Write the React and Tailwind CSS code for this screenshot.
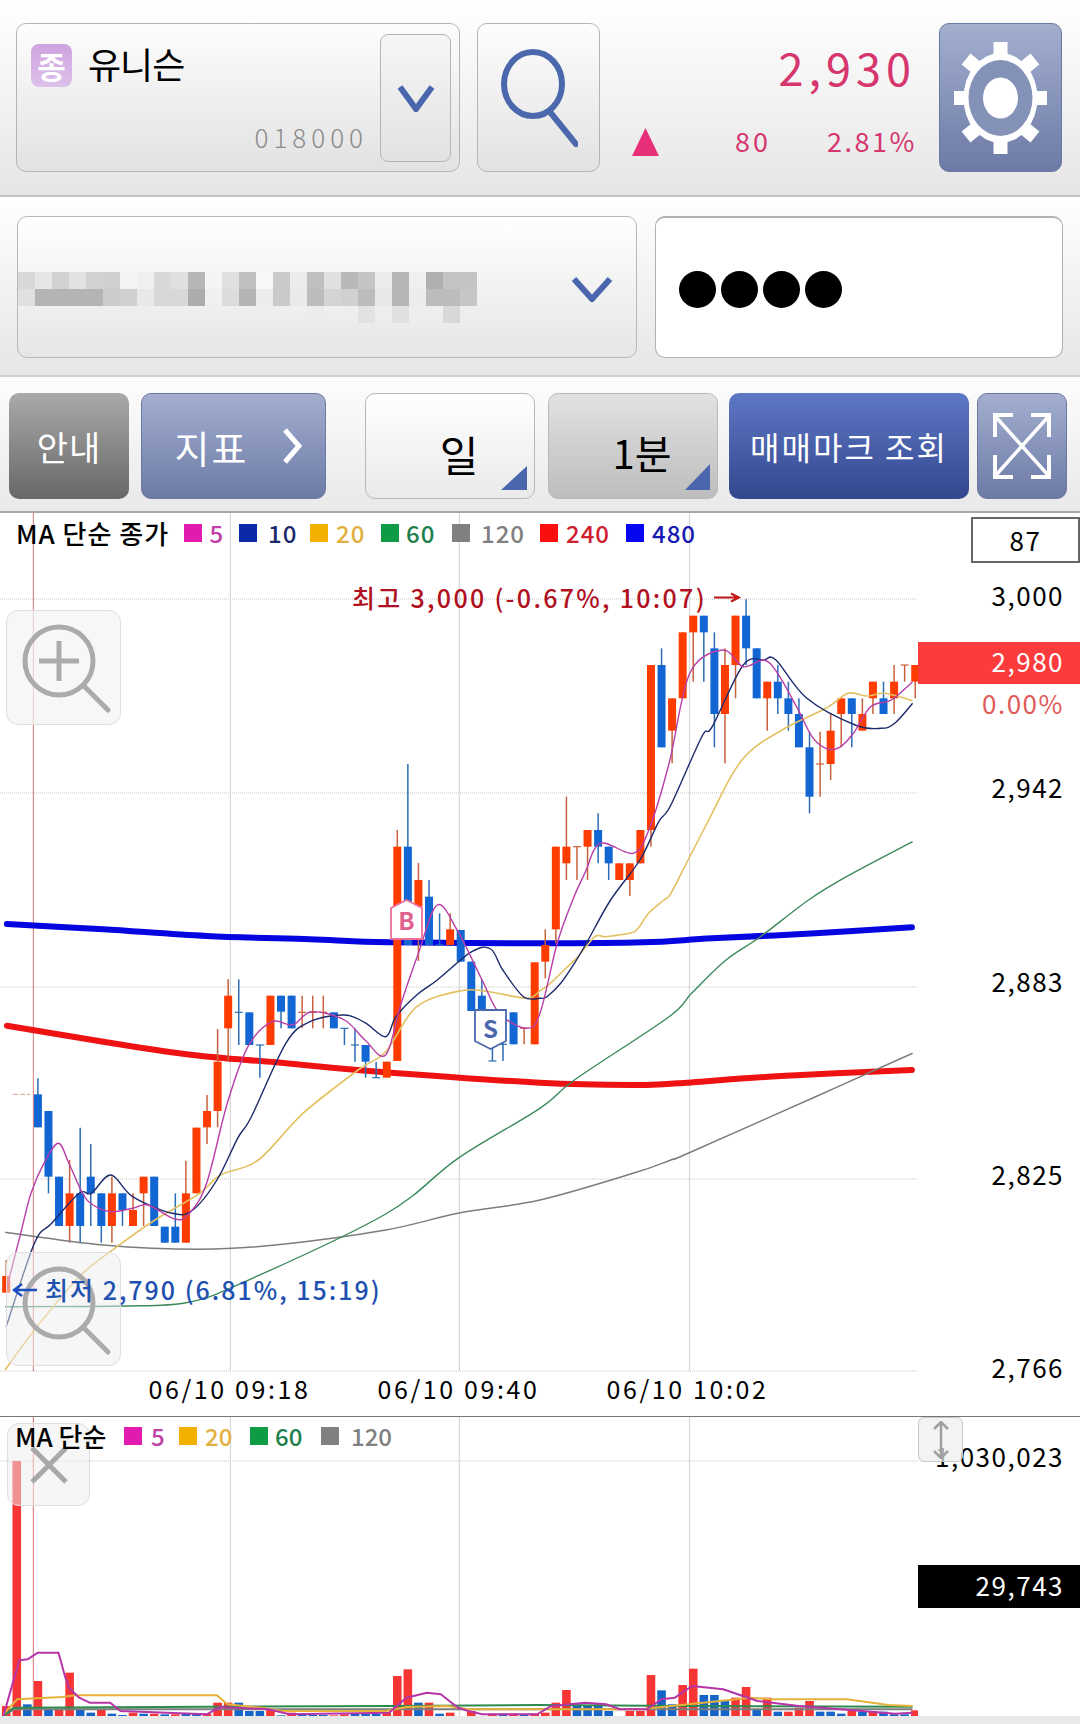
import React from "react";

const FONT = { fontFamily: '"Noto Sans CJK KR", "Noto Sans", sans-serif' };

const TOP = 513;
const z4 = ([x, y]) => [x / 2.904, 900 + y / 3 - TOP];
const z3 = ([x, y]) => [540 + x / 2.904, 510 + y / 3 - TOP];
const z5 = ([x, y]) => [540 + x / 2.904, 900 + y / 3 - TOP];
const toPts = (list) => list.map(([x, y]) => `${x.toFixed(1)},${y.toFixed(1)}`).join(" ");
const smooth = (p) => {
  let d = `M${p[0][0].toFixed(1)} ${p[0][1].toFixed(1)}`;
  for (let i = 0; i < p.length - 1; i++) {
    const a = p[i - 1] || p[i], b = p[i], c = p[i + 1], e = p[i + 2] || c;
    const c1x = b[0] + (c[0] - a[0]) / 6, c1y = b[1] + (c[1] - a[1]) / 6;
    const c2x = c[0] - (e[0] - b[0]) / 6, c2y = c[1] - (e[1] - b[1]) / 6;
    d += `C${c1x.toFixed(1)} ${c1y.toFixed(1)} ${c2x.toFixed(1)} ${c2y.toFixed(1)} ${c[0].toFixed(1)} ${c[1].toFixed(1)}`;
  }
  return d;
};

const ma480 = [...[[20,72],[300,88],[600,108],[900,118],[1130,127],[1568,130]].map(z4), ...[[300,127],[500,115],[800,100],[1080,82]].map(z5)];
const ma240 = [...[[20,377],[300,425],[560,465],[800,487],[1100,515],[1568,548]].map(z4), ...[[280,555],[400,550],[700,528],[1080,510]].map(z5)];
const ma120 = [...[[15,997],[300,1035],[580,1048],[800,1035],[1120,990],[1330,940],[1568,900]].map(z4), ...[[270,820],[380,780],[430,760],[800,590],[1082,460]].map(z5)];
const ma60 = [...[[15,1220],[350,1218],[540,1208],[700,1150],[1120,942],[1330,775],[1568,625]].map(z4), ...[[100,540],[375,350],[440,280],[540,180],[640,110],[780,0]].map(z5), ...[[890,1100],[1082,995]].map(z3)];
const ma20 = [...[[15,1410],[100,1290],[230,1130],[340,1040],[450,960],[580,880],[640,825],[750,780],[880,640],[1040,510],[1120,455],[1210,320],[1340,272],[1420,275],[1530,295]].map(z4), ...[[0,272],[30,250],[70,210],[110,170],[160,110],[190,110],[260,100],[285,85],[315,40],[360,0]].map(z5), ...[[380,1150],[430,1050],[490,930],[560,790],[620,715],[720,650],[830,595],[895,550],[950,558],[1000,550],[1082,572]].map(z3)];
const ma10 = [...[[18,1280],[100,1030],[150,970],[230,880],[265,880],[322,825],[385,890],[500,940],[560,930],[630,840],[690,715],[730,650],[830,430],[900,365],[1000,345],[1060,368],[1120,410],[1150,350],[1210,285],[1270,240],[1370,155],[1425,147],[1460,210],[1520,290],[1568,295]].map(z4), ...[[20,290],[60,250],[100,190],[140,120],[205,0]].map(z5), ...[[290,1050],[345,935],[380,885],[470,680],[500,650],[590,465],[650,450],[685,450],[775,565],[915,645],[990,655],[1030,640],[1082,580]].map(z3)];
const ma5 = [...[[18,1170],[60,1000],[90,880],[130,785],[170,730],[200,790],[240,880],[270,915],[322,935],[385,925],[430,915],[510,958],[550,940],[600,850],[660,610],[720,440],[790,365],[850,375],[905,335],[1000,360],[1060,420],[1120,465],[1165,310],[1215,160],[1270,15],[1330,95],[1400,240],[1450,340],[1530,385]].map(z4), ...[[0,340],[50,130],[95,0]].map(z5), ...[[130,1090],[175,1000],[270,1030],[316,960],[375,760],[435,490],[530,420],[590,470],[650,450],[690,490],[745,590],[790,680],[830,715],[870,712],[910,670],[960,590],[1020,570],[1082,515]].map(z3)];

const C = [
  [0,"r",1128,1178,1080,1178],[3,"b",583,682,535,682],[4,"b",633,830,633,880],[5,"b",830,978,830,978],
  [6,"r",880,978,780,1028],[7,"b",880,978,683,1028],[8,"b",830,880,732,978],[9,"b",880,978,880,1028],
  [10,"r",880,978,830,1028],[11,"b",880,930,880,978],[12,"r",930,978,880,978],[13,"r",830,880,830,978],
  [14,"b",830,978,830,978],[15,"b",980,1028,980,1028],[16,"b",980,1028,880,1028],[17,"r",880,1028,782,1028],
  [18,"r",683,880,683,880],[19,"r",633,682,585,732],[20,"r",485,633,387,682],[21,"r",287,385,238,485],
  [22,"b",337,337,238,435],[23,"b",337,435,337,435],[24,"b",435,435,435,533],[25,"r",287,435,287,435],
  [26,"b",287,335,287,385],[27,"b",287,385,287,385],[28,"r",337,337,287,385],[29,"r",337,337,287,385],
  [30,"r",337,337,287,385],[31,"b",337,385,337,385],[32,"b",385,385,385,435],[33,"b",435,435,385,485],
  [34,"b",435,485,435,533],[35,"b",533,533,485,533],[36,"r",485,533,485,533],[37,"r",-160,483,-210,483],
  [38,"b",-160,135,-408,135],[39,"r",-60,20,-111,183],[40,"b",-10,135,-60,135],[41,"b",135,135,40,135],
  [42,"r",88,135,40,135],[43,"b",90,185,90,185],[44,"b",185,333,185,333],[45,"b",287,333,238,333],
  [46,"b",483,483,430,483],[47,"b",433,433,430,483],[48,"b",337,433,337,433],[49,"r",385,385,385,433],
  [50,"r",187,433,187,433],[51,"r",135,185,88,235],[52,"r",-160,88,-160,130],
];
const D = [
  [53,"r",1010,1060,860,1110],[54,"r",1010,1010,1010,1110],[55,"r",960,1010,960,1110],[56,"b",960,1010,910,1060],
  [57,"b",1010,1060,1010,1110],[58,"r",1060,1110,1060,1110],[59,"r",1060,1110,1060,1158],[60,"r",960,1060,960,1060],
  [61,"r",465,960,465,1010],[62,"b",465,712,415,712],[63,"r",565,662,565,760],[64,"r",367,565,367,565],
  [65,"r",317,367,317,515],[66,"b",317,367,317,515],[67,"b",415,612,367,712],[68,"r",465,612,415,760],
  [69,"r",317,465,317,565],[70,"b",317,415,268,465],[71,"b",415,565,415,565],[72,"r",515,565,515,662],
  [73,"b",515,565,465,612],[74,"b",565,612,515,662],[75,"b",612,712,565,712],[76,"b",712,860,665,910],
  [77,"r",762,762,665,860],[78,"r",662,762,612,810],[79,"r",565,612,565,712],[80,"b",565,612,565,712],
  [81,"r",612,662,565,662],[82,"r",515,565,515,612],[83,"b",565,612,515,612],[84,"r",515,565,465,612],
  [85,"r",465,465,465,515],[86,"r",465,515,465,565],
];
const candles = [
  ...C.map(([i, c, a, b, w1, w2]) => ({ i, c, y: (v) => 900 + v / 3 - TOP, a, b, w1, w2 })),
  ...D.map(([i, c, a, b, w1, w2]) => ({ i, c, y: (v) => 510 + v / 3 - TOP, a, b, w1, w2 })),
];
const cx = (i) => 6.2 + 10.57 * i;

function Candles() {
  return candles.map(({ i, c, y, a, b, w1, w2 }) => {
    const x = cx(i);
    const fill = c === "r" ? "#ff3c00" : "#1166d4";
    const wick = c === "r" ? "#c8623c" : "#2a6db5";
    return (
      <g key={i}>
        <line x1={x} x2={x} y1={y(w1)} y2={y(w2)} stroke={wick} strokeWidth="1.5" />
        {a === b ? (
          <line x1={x - 4} x2={x + 4} y1={y(a)} y2={y(a)} stroke={wick} strokeWidth="1.2" />
        ) : (
          <rect x={x - 4} y={y(a)} width="8" height={y(b) - y(a)} fill={fill} />
        )}
      </g>
    );
  });
}

function PriceChart() {
  const vh = 859;
  return (
    <svg className="absolute left-0 top-0" width="918" height={vh} viewBox={`0 0 918 ${vh}`} fill="none">
      {[86, 280, 474, 666, 858].map((y) => (
        <line key={y} x1="0" x2="919" y1={y} y2={y} stroke="#c4c4c4" strokeWidth="1" strokeDasharray="1 1" />
      ))}
      {[230.4, 459.4, 689.5].map((x) => (
        <line key={x} x1={x} x2={x} y1="0" y2="858" stroke="#d8d8d8" strokeWidth="1.2" />
      ))}
      <line x1="33.4" x2="33.4" y1="0" y2="858" stroke="#dc8d8d" strokeWidth="1.2" />
      <path d={smooth(ma480)} stroke="#0505e0" strokeWidth="6" strokeLinecap="round" />
      <path d={smooth(ma240)} stroke="#ee1212" strokeWidth="6" strokeLinecap="round" />
      <line x1="13" x2="30" y1={583 / 3 + 900 - TOP} y2={583 / 3 + 900 - TOP} stroke="#d0a090" strokeWidth="1" strokeDasharray="5 2" />
      <Candles />
      <path d={smooth(ma120)} stroke="#7d7d7d" strokeWidth="1.5" />
      <path d={smooth(ma60)} stroke="#3c8a5c" strokeWidth="1.4" />
      <path d={smooth(ma20)} stroke="#e3c060" strokeWidth="1.6" />
      <path d={smooth(ma10)} stroke="#1c2a6c" strokeWidth="1.4" />
      <path d={smooth(ma5)} stroke="#b83ea8" strokeWidth="1.4" />
      <path d="M714 84.5H739M731 80.5L739 84.5L731 88.5" stroke="#c01818" strokeWidth="2" />
    </svg>
  );
}

const volBars = [
  ["r",915],["r",180],["b",910],["r",840],["b",925],["r",925],["r",815],["b",925],["b",935],["r",925],
  ["b",938],["b",942],["r",935],["b",938],["r",938],["b",940],["r",940],["b",938],["b",938],["r",938],
  ["r",905],["r",905],["b",905],["b",930],["b",930],["r",925],["b",943],["r",935],["b",938],["b",942],
  ["b",942],["r",943],["r",940],["b",938],["b",938],["b",938],["r",935],["r",825],["r",805],["b",905],
  ["r",905],["b",938],["r",935],["b",945],["r",930],["b",945],["r",938],["b",938],["r",938],["b",942],
  ["r",938],["r",935],["r",905],["r",867],["b",910],["b",915],["b",910],["b",930],["b",945],["r",930],
  ["r",930],["r",822],["b",868],["b",910],["r",852],["r",803],["b",882],["b",882],["b",900],["r",890],
  ["r",858],["b",925],["r",890],["b",932],["r",932],["r",920],["r",900],["b",932],["b",932],["b",938],
  ["r",930],["b",932],["r",930],["b",932],["b",940],["b",940],["r",928],
];
const z6 = ([x, y]) => [x / 1.452, y / 3 - 16];
const vMa5 = [[5,945],[18,850],[28,778],[40,775],[55,755],[85,755],[95,830],[100,860],[115,890],[130,905],[160,905],[175,930],[300,940],[320,918],[390,925],[420,940],[565,935],[590,890],[620,875],[640,880],[665,920],[680,930],[700,940],[780,940],[800,915],[850,905],[880,910],[900,925],[940,925],[960,895],[980,890],[1005,855],[1050,865],[1100,900],[1160,915],[1220,925],[1300,938],[1325,935]].map(z6);
const vMa20 = [[5,940],[25,895],[90,888],[110,883],[315,883],[330,910],[380,920],[410,930],[560,930],[590,918],[650,915],[680,925],[790,925],[900,925],[930,925],[1000,910],[1090,890],[1120,895],[1230,895],[1290,912],[1325,915]].map(z6);
const vMa60 = [[5,945],[20,920],[570,915],[780,912],[1000,915],[1325,917]].map(z6);
const vMa120 = [[5,945],[20,925],[1325,925]].map(z6);

function VolumeChart() {
  return (
    <svg className="absolute left-0 top-0" width="918" height="299" viewBox="0 0 918 299" fill="none">
      <line x1="0" x2="919" y1="44" y2="44" stroke="#c4c4c4" strokeWidth="1" strokeDasharray="1 1" />
      {[230.4, 459.4, 689.5].map((x) => (
        <line key={x} x1={x} x2={x} y1="0" y2="299" stroke="#d8d8d8" strokeWidth="1.2" />
      ))}
      {volBars.map(([c, top], i) => {
        const x = cx(i) - 4.3;
        const y = top / 3 - 16;
        return <rect key={i} x={x} y={y} width="8.6" height={300 - 1 - y} fill={c === "r" ? "#f73535" : "#1565c8"} />;
      })}
      <line x1="33.4" x2="33.4" y1="0" y2="299" stroke="#e28a8a" strokeWidth="1.2" />
      <polyline points={toPts(vMa120)} stroke="#7d7d7d" strokeWidth="2" />
      <polyline points={toPts(vMa60)} stroke="#2f8a50" strokeWidth="2" />
      <polyline points={toPts(vMa20)} stroke="#e5b13a" strokeWidth="2" />
      <polyline points={toPts(vMa5)} stroke="#b535a8" strokeWidth="2" strokeLinejoin="round" />
    </svg>
  );
}

const mosaicA = "d8 e6 d2 e2 d2 d0 f4 f0 d8 e0 b6 f4 e0 c0 f8 ca ec c0 e0 b8 c4 ec b6 f0 b0 c4 c4".split(" ");
const mosaicB = "e0 b4 b4 b4 b4 cc d0 e8 d8 d8 ac f0 dc b4 ec ca ea bc d4 d0 bc e8 b6 ec bc bc c6".split(" ");
const mosaicC = { 17: "ececec", 20: "e2e2e2", 22: "e0e0e0", 25: "d8d8d8" };

function Mosaic() {
  return (
    <svg width="459" height="51" viewBox="0 0 459 51" className="block blur-[0.6px]">
      {mosaicA.map((v, i) => <rect key={`a${i}`} x={i * 17} y="0" width="17" height="17" fill={`#${v}${v}${v}`} />)}
      {mosaicB.map((v, i) => <rect key={`b${i}`} x={i * 17} y="17" width="17" height="17" fill={`#${v}${v}${v}`} />)}
      {Object.entries(mosaicC).map(([i, v]) => <rect key={`c${i}`} x={i * 17} y="34" width="17" height="17" fill={`#${v}`} />)}
    </svg>
  );
}

function Chevron({ w, h, sw = 6 }) {
  return (
    <svg width={w} height={h} viewBox={`0 0 ${w} ${h}`} fill="none">
      <path d={`M${sw / 2} ${sw / 2}L${w / 2} ${h - sw / 2}L${w - sw / 2} ${sw / 2}`} stroke="#4a66ad" strokeWidth={sw} />
    </svg>
  );
}

function Gear() {
  const teeth = [];
  for (let a = 0; a < 8; a++) {
    const t = (a * Math.PI) / 4;
    const sx = Math.sin(t), sy = -Math.cos(t);
    const tx = 46.5 + sx * 40, ty = 56 + sy * 48;
    teeth.push(<rect key={a} x={tx - 7} y={ty - 8} width="14" height="16" fill="#fff" transform={`rotate(${(Math.atan2(sy * 46, sx * 56) * 180) / Math.PI + 90} ${tx} ${ty})`} />);
  }
  return (
    <svg width="93" height="112" viewBox="0 0 93 112">
      {teeth}
      <ellipse cx="46.5" cy="56" rx="37" ry="45" fill="#fff" />
      <ellipse cx="46.5" cy="56" rx="32" ry="38" fill="#8592b8" />
      <ellipse cx="46.5" cy="56" rx="17.5" ry="20.5" fill="#fff" />
    </svg>
  );
}

function ExpandIcon() {
  return (
    <svg width="58" height="68" viewBox="0 0 58 68" fill="none" stroke="#fff" strokeWidth="4">
      <path d="M3 5L55 63M55 5L3 63" strokeWidth="3.5" />
      <path d="M20 3H2V25M38 3H56V25M20 65H2V43M38 65H56V43" />
    </svg>
  );
}

function Magnifier({ plus }) {
  return (
    <svg width="115" height="115" viewBox="0 0 115 115" fill="none" stroke="#ababab" strokeWidth="5">
      <circle cx="52" cy="50" r="34" />
      {plus ? <path d="M52 30V70M32 50H72" /> : null}
      <path d="M77 75L101 99" strokeLinecap="round" />
    </svg>
  );
}

function LegendItem({ sq, color, label, gap, width }) {
  return (
    <div className="flex items-center shrink-0" style={{ width }}>
      <span className="w-[18px] h-[18px] shrink-0" style={{ backgroundColor: sq }} />
      <span style={{ color, marginLeft: gap }}>{label}</span>
    </div>
  );
}

export default function App() {
  return (
    <div className="w-[1080px] h-[1724px] overflow-hidden bg-white flex flex-col text-black" style={FONT}>
      {/* Row 1 */}
      <div className="h-[197px] shrink-0 flex items-start pt-[23px] pl-[16px] bg-linear-to-b from-[#ffffff] to-[#e6e6e6] border-b-2 border-[#c4c4c4]">
        <div className="w-[444px] h-[149px] shrink-0 flex rounded-[10px] border border-[#b4b4b4] bg-linear-to-b from-[#fdfdfd] to-[#e2e2e2]">
          <div className="flex-1 flex flex-col pl-[14px] pt-[20px] pr-[12px]">
            <div className="flex items-start gap-[16px]">
              <div className="w-[41px] h-[43px] rounded-[8px] bg-linear-to-b from-[#cfa3e0] to-[#dcc0ea] flex items-center justify-center text-white text-[31px] font-bold leading-none">종</div>
              <div className="text-[36px] leading-[42px] tracking-[-1px] font-normal -mt-[2px]">유니슨</div>
            </div>
            <div className="mt-auto mb-[19px] text-right text-[26px] leading-[30px] tracking-[5px] text-[#8a8a8a] font-light">018000</div>
          </div>
          <div className="w-[71px] h-[128px] mt-[10px] mr-[8px] rounded-[8px] border border-[#b4b4b4] bg-linear-to-b from-[#f6f6f6] to-[#e2e2e2] flex items-center justify-center">
            <Chevron w={38} h={28} />
          </div>
        </div>
        <div className="w-[123px] h-[149px] shrink-0 ml-[17px] rounded-[10px] border border-[#b4b4b4] bg-linear-to-b from-[#fdfdfd] to-[#e2e2e2] flex items-center justify-center">
          <svg width="78" height="100" viewBox="0 0 78 100" fill="none" stroke="#4c68ad" strokeWidth="6">
            <ellipse cx="33" cy="36" rx="29" ry="32" />
            <path d="M50 64L76 96" strokeLinecap="round" />
          </svg>
        </div>
        <div className="flex-1 h-[149px] flex flex-col text-[#d6366e] font-normal">
          <div className="text-right pr-[23px] text-[45px] leading-[50px] tracking-[5px] mt-[19px]">2,930</div>
          <div className="flex items-center mt-[34px] ml-[32px] text-[27px] leading-[30px]">
            <svg width="27" height="28" viewBox="0 0 27 28" className="mt-[2px]"><path d="M13.5 0L27 28H0Z" fill="#e8307a" /></svg>
            <span className="ml-[76px] tracking-[3px]">80</span>
            <span className="ml-[56px] tracking-[2.5px]">2.81%</span>
          </div>
        </div>
        <div className="w-[123px] h-[149px] shrink-0 mr-[18px] rounded-[10px] border border-[#6b789f] bg-linear-to-b from-[#a4afcf] to-[#6c7aa6] flex items-center justify-center">
          <Gear />
        </div>
      </div>

      {/* Row 2 */}
      <div className="h-[180px] shrink-0 flex items-start pt-[19px] pl-[17px] bg-linear-to-b from-[#ffffff] to-[#e6e6e6] border-b-2 border-[#d0d0d0]">
        <div className="w-[620px] h-[142px] shrink-0 rounded-[10px] border border-[#b8b8b8] bg-linear-to-b from-[#ffffff] to-[#e6e6e6] flex items-start">
          <div className="mt-[55px]"><Mosaic /></div>
          <div className="ml-[94px] mt-[59px]"><Chevron w={42} h={26} /></div>
        </div>
        <div className="w-[408px] h-[142px] shrink-0 ml-[18px] rounded-[10px] border border-[#b0b0b0] border-t-2 bg-white flex items-center gap-[5px] pl-[23px] pt-[4px]">
          <span className="w-[37px] h-[37px] rounded-full bg-black" />
          <span className="w-[37px] h-[37px] rounded-full bg-black" />
          <span className="w-[37px] h-[37px] rounded-full bg-black" />
          <span className="w-[37px] h-[37px] rounded-full bg-black" />
        </div>
      </div>

      {/* Row 3 */}
      <div className="h-[136px] shrink-0 flex items-start pt-[16px] pl-[9px] bg-linear-to-b from-[#fdfdfd] to-[#e9e9e9] border-b-2 border-[#a8a8a8]">
        <div className="w-[120px] h-[106px] shrink-0 rounded-[10px] bg-linear-to-b from-[#aaaaaa] to-[#686868] flex items-center justify-center text-white text-[34px] font-normal tracking-[1px]">안내</div>
        <div className="w-[185px] h-[106px] shrink-0 ml-[12px] rounded-[10px] border border-[#6b789f] bg-linear-to-b from-[#a4afcf] to-[#6c7aa6] flex items-center justify-center gap-[34px] pl-[10px] text-white text-[38px] font-normal">
          <span className="tracking-[2px]">지표</span>
          <svg width="20" height="36" viewBox="0 0 20 36" fill="none" stroke="#fff" strokeWidth="5"><path d="M3 2L17 18L3 34" /></svg>
        </div>
        <div className="w-[170px] h-[106px] shrink-0 ml-[39px] relative rounded-[10px] border border-[#b8b8b8] bg-linear-to-b from-[#ffffff] to-[#eaeaea] flex items-center justify-center text-[42px] font-normal pl-[18px] pt-[14px]">
          일
          <svg className="absolute right-[7px] bottom-[8px]" width="26" height="24" viewBox="0 0 26 24"><path d="M26 0V24H0Z" fill="#4a66ad" /></svg>
        </div>
        <div className="w-[170px] h-[106px] shrink-0 ml-[13px] relative rounded-[10px] border border-[#b8b8b8] bg-linear-to-b from-[#e2e2e2] to-[#bdbdbd] flex items-center justify-center text-[40px] font-normal pl-[18px] pt-[12px]">
          1분
          <svg className="absolute right-[7px] bottom-[8px]" width="25" height="26" viewBox="0 0 25 26"><path d="M25 0V26H0Z" fill="#4a66ad" /></svg>
        </div>
        <div className="w-[240px] h-[106px] shrink-0 ml-[11px] rounded-[10px] bg-linear-to-b from-[#5f78c6] to-[#33478e] flex items-center justify-center text-white text-[32px] font-normal tracking-[2px] whitespace-nowrap">매매마크 조회</div>
        <div className="w-[90px] h-[106px] shrink-0 ml-[8px] rounded-[10px] border border-[#6b789f] bg-linear-to-b from-[#a4afcf] to-[#6c7aa6] flex items-center justify-center">
          <ExpandIcon />
        </div>
      </div>

      {/* Price chart */}
      <div className="h-[903px] shrink-0 flex">
        <div className="w-[918px] shrink-0 flex flex-col">
          <div className="h-[859px] relative">
            <PriceChart />
            <div className="relative flex items-center h-[40px] pl-[16px] text-[24px] leading-[30px] font-medium tracking-[1px]">
              <span className="w-[167.5px] shrink-0 text-[26px] whitespace-nowrap">MA 단순 종가</span>
              <LegendItem sq="#e21bb0" color="#c040a8" label="5" gap="8px" width="55.5px" />
              <LegendItem sq="#0a2aa8" color="#1c2a6c" label="10" gap="11px" width="71px" />
              <LegendItem sq="#f2b000" color="#e2b040" label="20" gap="8px" width="71px" />
              <LegendItem sq="#0f9a45" color="#1d7f4c" label="60" gap="7px" width="71px" />
              <LegendItem sq="#808080" color="#808080" label="120" gap="11px" width="88px" />
              <LegendItem sq="#fa0f0f" color="#d02030" label="240" gap="8px" width="86px" />
              <LegendItem sq="#0505f0" color="#1a1ab0" label="480" gap="8px" width="71px" />
            </div>
            <div className="absolute left-[352px] top-[68px] text-[25px] leading-[32px] font-medium text-[#b01020] tracking-[2.3px] whitespace-nowrap">최고 3,000 (-0.67%, 10:07)</div>
            <div className="absolute left-[6px] top-[97px] w-[115px] h-[115px] rounded-[12px] border border-[#dedede] bg-[#f3f3f3]/70">
              <Magnifier plus />
            </div>
            <div className="absolute left-[6px] top-[739px] w-[115px] h-[114px] rounded-[12px] border border-[#dedede] bg-[#ededed]/50">
              <Magnifier />
            </div>
            <svg className="absolute left-[12px] top-[769px]" width="26" height="16" viewBox="0 0 26 16" fill="none" stroke="#1a4fc0" strokeWidth="2.5"><path d="M25 8H2M10 2L2 8L10 14" /></svg>
            <div className="absolute left-[45px] top-[760px] text-[25px] leading-[32px] font-medium text-[#2050b0] tracking-[2px] whitespace-nowrap">최저 2,790 (6.81%, 15:19)</div>
            <div className="absolute left-[390px] top-[386px] w-[33px] h-[41px] flex items-center justify-center text-[24px] font-bold text-[#e0608e]">
              <svg className="absolute inset-0" width="33" height="41" viewBox="0 0 33 41"><path d="M1 9L16.5 1L32 9V40H1Z" fill="#fff" stroke="#ee6e9c" strokeWidth="1.8" /></svg>
              <span className="relative">B</span>
            </div>
            <div className="absolute left-[474px] top-[496px] w-[33px] h-[41px] flex items-center justify-center text-[24px] font-bold text-[#4c68ad] pb-[4px]">
              <svg className="absolute inset-0" width="33" height="41" viewBox="0 0 33 41"><path d="M1 1H32V32L16.5 40L1 32Z" fill="#fff" stroke="#4c68ad" strokeWidth="1.8" /></svg>
              <span className="relative">S</span>
            </div>
          </div>
          <div className="h-[44px] flex items-start pl-[115px] text-[25px] leading-[32px] tracking-[2.6px]">
            <span className="w-[229px] text-center whitespace-nowrap">06/10 09:18</span>
            <span className="w-[229px] text-center whitespace-nowrap">06/10 09:40</span>
            <span className="w-[229px] text-center whitespace-nowrap">06/10 10:02</span>
          </div>
        </div>
        <div className="flex-1 flex flex-col items-end text-[26px] leading-[30px] tracking-[1.5px]">
          <div className="w-[109px] h-[46px] mt-[4px] border-2 border-[#666] flex items-center justify-center">87</div>
          <div className="mt-[17px] pr-[16px]">3,000</div>
          <div className="mt-[32px] w-full h-[42px] bg-[#fc3c3c] text-white flex items-center justify-end pr-[16px] pb-[4px]">2,980</div>
          <div className="mt-[4px] pr-[16px] text-[#e05a5a]">0.00%</div>
          <div className="mt-[54px] pr-[16px]">2,942</div>
          <div className="mt-[164px] pr-[16px]">2,883</div>
          <div className="mt-[163px] pr-[16px]">2,825</div>
          <div className="mt-[163px] pr-[16px]">2,766</div>
        </div>
      </div>

      {/* Volume chart */}
      <div className="h-[300px] shrink-0 relative flex border-t border-[#777]">
        <div className="w-[918px] shrink-0 relative">
          <VolumeChart />
          <div className="absolute left-[7px] top-[6px] w-[83px] h-[83px] rounded-[12px] border border-[#dedede] bg-[#ededed]/50 flex items-center justify-center">
            <svg width="40" height="40" viewBox="0 0 40 40" fill="none" stroke="#a8a8a8" strokeWidth="5"><path d="M3 3L37 37M37 3L3 37" /></svg>
          </div>
          <div className="relative flex items-center h-[38px] pl-[15px] text-[24px] leading-[30px] font-medium">
            <span className="w-[109px] shrink-0 text-[26px] whitespace-nowrap">MA 단순</span>
            <LegendItem sq="#e21bb0" color="#c040a8" label="5" gap="9px" width="55px" />
            <LegendItem sq="#f2b000" color="#e2b040" label="20" gap="8px" width="71px" />
            <LegendItem sq="#0f9a45" color="#1d7f4c" label="60" gap="7px" width="71px" />
            <LegendItem sq="#808080" color="#808080" label="120" gap="12px" width="71px" />
          </div>
        </div>
        <div className="flex-1 flex flex-col items-end text-[26px] leading-[30px] tracking-[1.5px]">
          <div className="mt-[24px] pr-[16px] whitespace-nowrap">1,030,023</div>
          <div className="mt-[94px] w-full h-[43px] bg-black text-white flex items-center justify-end pr-[16px] pb-[4px]">29,743</div>
        </div>
        <div className="absolute left-[918px] top-[0px] w-[45px] h-[45px] rounded-[6px] border border-[#c8c8c8] bg-[#eeeeee]/70 flex items-center justify-center">
          <svg width="18" height="38" viewBox="0 0 18 38" fill="none" stroke="#a0a0a0" strokeWidth="2.5"><path d="M9 1V37M2 8L9 1L16 8M2 30L9 37L16 30" /></svg>
        </div>
      </div>
      <div className="flex-1 bg-[#e9e9e9]" />
    </div>
  );
}
